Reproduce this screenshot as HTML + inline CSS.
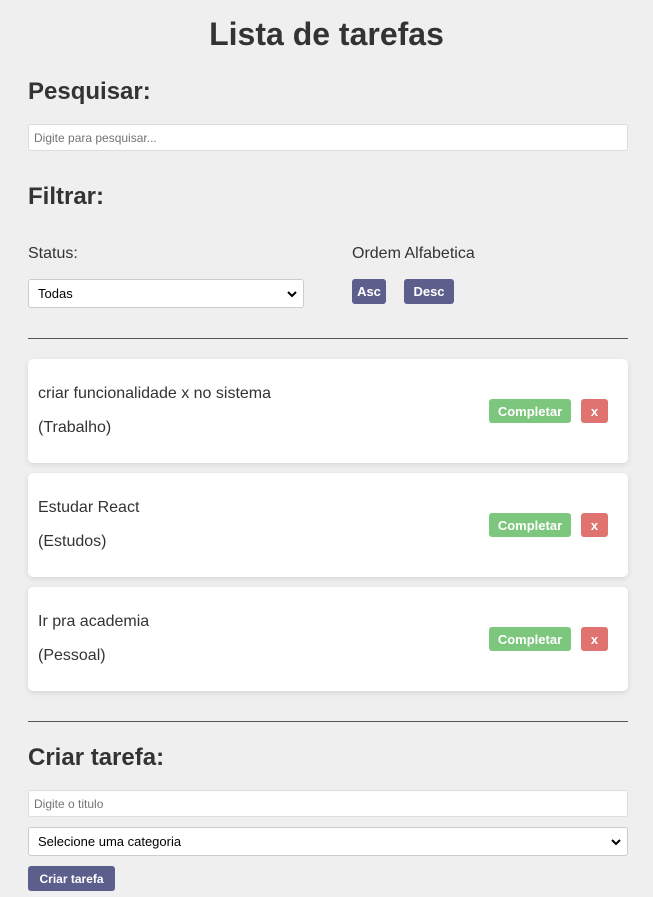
<!DOCTYPE html>
<html><head><meta charset="utf-8"><style>
*{box-sizing:border-box;margin:0;padding:0}
body{width:653px;height:897px;background:#efefef;font-family:"Liberation Sans",Arial,sans-serif;color:#333;position:relative;overflow:hidden}
.a{position:absolute}
h1{position:absolute;left:0;width:653px;text-align:center;top:16px;font-size:32px;font-weight:bold}
h2{position:absolute;left:28px;font-size:24px;font-weight:bold}
.inp{position:absolute;left:28px;width:600px;background:#fff;border:1px solid #ddd;border-radius:3px;font-size:12px;color:#757575;padding-left:5px;display:flex;align-items:center}
.sel{position:absolute;background:#fff;border:1px solid #ccc;border-radius:3px;font-size:13px;color:#000;padding-left:9px;display:flex;align-items:center}
.chev{position:absolute;right:6px;top:50%;margin-top:-4px}
.btn{position:absolute;color:#fff;font-weight:bold;font-size:13px;border-radius:3px;display:flex;align-items:center;justify-content:center}
.p{background:#5c5e8c}
.g{background:#7dc67d}
.r{background:#e07370}
hr{position:absolute;left:28px;width:600px;border:0;border-top:1px solid #555;height:0}
.card{position:absolute;left:28px;width:600px;height:104px;background:#fff;border-radius:5px;box-shadow:0 2px 6px rgba(0,0,0,.1)}
.card .t{position:absolute;left:10px;font-size:16px;color:#333}
</style></head><body>
<h1>Lista de tarefas</h1>
<h2 style="top:78px">Pesquisar:</h2>
<div class="inp" style="top:124px;height:27px">Digite para pesquisar...</div>
<h2 style="top:183px">Filtrar:</h2>
<div class="a" style="left:28px;top:245px;font-size:16px">Status:</div>
<div class="a" style="left:352px;top:245px;font-size:16px">Ordem Alfabetica</div>
<div class="sel" style="left:28px;top:279px;width:276px;height:29px">Todas<svg class="chev" width="10" height="8" viewBox="0 0 10 8"><path d="M1 2l4 4 4-4" stroke="#000" stroke-width="2" fill="none"/></svg></div>
<div class="btn p" style="left:352px;top:279px;width:34px;height:25px">Asc</div>
<div class="btn p" style="left:404px;top:279px;width:50px;height:25px">Desc</div>
<hr style="top:338px">
<div class="card" style="top:359px"><div class="t" style="top:26px">criar funcionalidade x no sistema</div><div class="t" style="top:60px">(Trabalho)</div><div class="btn g" style="left:461px;top:40px;width:82px;height:24px">Completar</div><div class="btn r" style="left:553px;top:40px;width:27px;height:24px">x</div></div>
<div class="card" style="top:473px"><div class="t" style="top:26px">Estudar React</div><div class="t" style="top:60px">(Estudos)</div><div class="btn g" style="left:461px;top:40px;width:82px;height:24px">Completar</div><div class="btn r" style="left:553px;top:40px;width:27px;height:24px">x</div></div>
<div class="card" style="top:587px"><div class="t" style="top:26px">Ir pra academia</div><div class="t" style="top:60px">(Pessoal)</div><div class="btn g" style="left:461px;top:40px;width:82px;height:24px">Completar</div><div class="btn r" style="left:553px;top:40px;width:27px;height:24px">x</div></div>
<hr style="top:721px">
<h2 style="top:744px">Criar tarefa:</h2>
<div class="inp" style="top:790px;height:27px">Digite o titulo</div>
<div class="sel" style="left:28px;top:827px;width:600px;height:29px">Selecione uma categoria<svg class="chev" width="10" height="8" viewBox="0 0 10 8"><path d="M1 2l4 4 4-4" stroke="#000" stroke-width="2" fill="none"/></svg></div>
<div class="btn p" style="left:28px;top:866px;width:87px;height:25px;font-size:12px">Criar tarefa</div>
</body></html>
